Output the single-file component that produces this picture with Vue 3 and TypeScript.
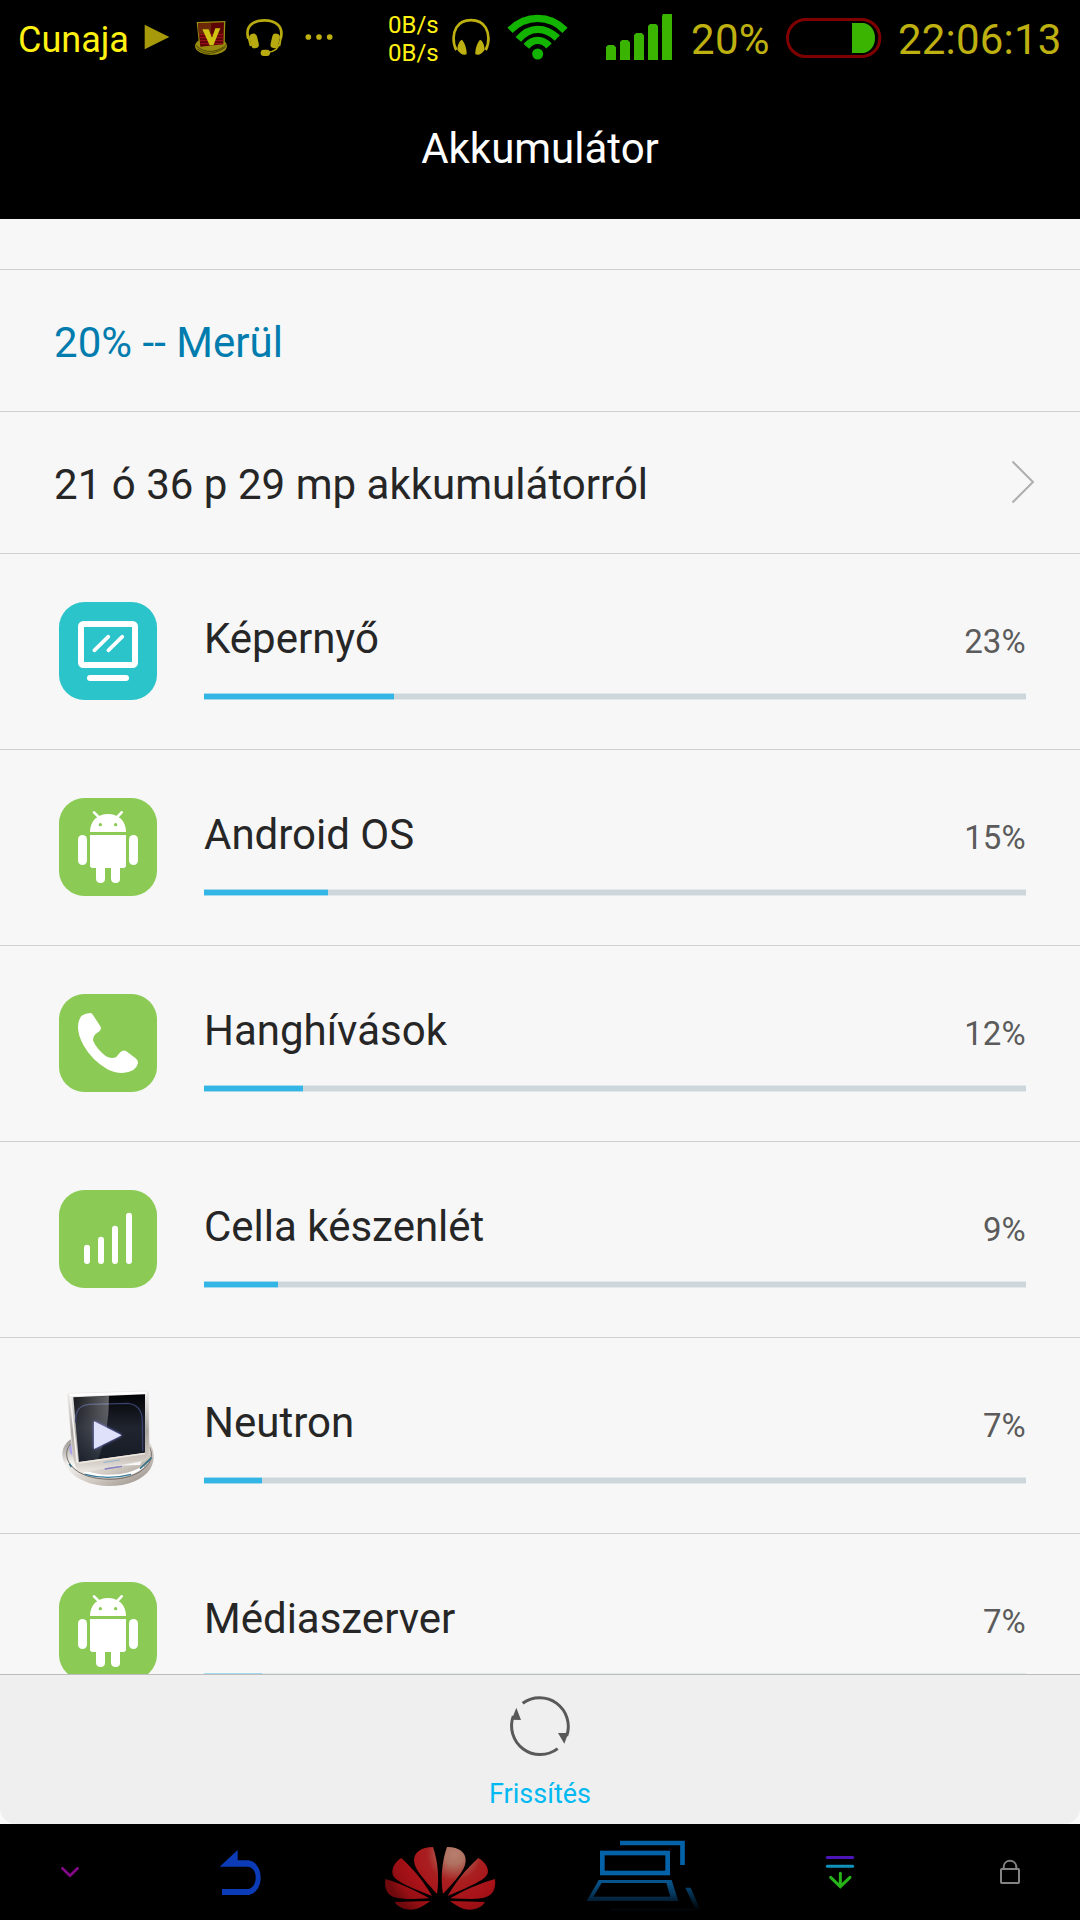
<script setup lang="ts">
type IconKind = 'screen' | 'android' | 'phone' | 'cell' | 'neutron'

interface Usage {
  name: string
  percent: number
  icon: IconKind
}

const usages: Usage[] = [
  { name: 'Képernyő', percent: 23, icon: 'screen' },
  { name: 'Android OS', percent: 15, icon: 'android' },
  { name: 'Hanghívások', percent: 12, icon: 'phone' },
  { name: 'Cella készenlét', percent: 9, icon: 'cell' },
  { name: 'Neutron', percent: 7, icon: 'neutron' },
  { name: 'Médiaszerver', percent: 7, icon: 'android' },
]

const TRACK = 822
const fillWidth = (percent: number): string => `${Math.ceil((TRACK * percent) / 100)}px`
</script>

<template>
  <div class="phone">
    <header class="status">
      <span class="carrier">Cunaja</span>
      <svg class="s-play" width="35" height="79" viewBox="420 0 105 237">
        <path d="M434 74 508 111 434 148Z" fill="#a69a0b" />
      </svg>
      <svg class="s-shield" width="42" height="79" viewBox="570 0 126 237">
        <ellipse cx="633" cy="138" rx="48" ry="27" fill="#968b0d" />
        <path d="M588 137q22 20 48 17t44-21M592 147q24 17 46 12t38-17" fill="none" stroke="#4d4600" stroke-width="3" />
        <path d="M590 66 676 63 674 134 598 142Z" fill="#9b9110" />
        <path d="M594 70 672 67 670 133 601 140Z" fill="#5c0306" />
        <path d="M594 70 634 69 632 100 596 102Z" fill="#6c2a08" />
        <path d="M598 104H671M599 113H671M600 122H670M601 131H669" stroke="#93101a" stroke-width="3.500" />
        <path d="M607 88H626L636 113 646 85H661L640 136H629Z" fill="#cfc212" />
      </svg>
      <svg class="s-headset" width="44" height="79" viewBox="729 0 132 237">
        <path d="M745 116C734 78 760 61 793 61S852 78 842 116" fill="none" stroke="#b8ab10" stroke-width="8" />
        <path d="M840 126Q836 154 800 158" fill="none" stroke="#b8ab10" stroke-width="5" />
        <rect x="751" y="101" width="23" height="44" rx="11" fill="#b8ab10" transform="rotate(-13 762 123)" />
        <rect x="814" y="101" width="23" height="44" rx="11" fill="#b8ab10" transform="rotate(13 826 123)" />
        <path d="M744 106 752 138M844 106 838 138" stroke="#b8ab10" stroke-width="6" />
        <rect x="782" y="149" width="28" height="19" rx="9" fill="#b8ab10" />
      </svg>
      <svg class="s-dots" width="40" height="79" viewBox="900 0 120 237" fill="#bdb010">
        <circle cx="925" cy="111" r="8.5" /><circle cx="957" cy="111" r="8.5" /><circle cx="989" cy="111" r="8.5" />
      </svg>
      <div class="traffic"><span>0B/s</span><span>0B/s</span></div>
      <svg width="42" height="79" viewBox="270 0 126 237">
        <path d="M289 150C276 126 280 99 289 83 307 53 359 53 377 83 386 99 390 126 377 150" fill="none" stroke="#bdb010" stroke-width="8" />
        <path d="M306 119C315 130 321 147 320 163 308 168 299 159 292 149 293 133 298 122 306 119ZM360 119C351 130 345 147 346 163 358 168 367 159 374 149 373 133 368 122 360 119Z" fill="#bdb010" />
      </svg>
      <svg class="s-wifi" width="65" height="79" viewBox="435 0 195 237">
        <g fill="none" stroke="#12b400" stroke-width="22">
          <path d="M450 91Q486 55 533 55T615 91" />
          <path d="M475 118Q501 88 533 88T592 114" />
          <path d="M499 139Q514 121 533 121T567 138" />
        </g>
        <circle cx="533" cy="162" r="16.5" fill="#12b400" />
      </svg>
      <svg class="s-signal" width="72" height="79" viewBox="729 0 216 237" fill="#3ab400">
        <path d="M738 180V141L744 135H761L768 142V180ZM780 180V126L786 120H803L810 127V180ZM822 180V105L829 99H845L852 106V180ZM864 180V78L870 72H888L894 78V180ZM906 180V48L909 42H936V180Z" />
      </svg>
      <span class="level">20%</span>
      <svg width="103" height="79" viewBox="186 0 309 237">
        <rect x="202.500" y="58.500" width="277" height="111" rx="55" fill="none" stroke="#800000" stroke-width="9" />
        <path d="M396 69H432C451 73 465 90 465 114S451 155 432 159H396Z" fill="#3ab400" />
      </svg>
      <span class="clock">22:06:13</span>
    </header>

    <div class="title">Akkumulátor</div>

    <main class="content">
      <div class="spacer"></div>
      <div class="line state">20% -- Merül</div>
      <div class="line">
        <span>21 ó 36 p 29 mp akkumulátorról</span>
        <svg class="chevron" width="24" height="44" viewBox="0 0 24 44">
          <path d="M1.500 1.500 22 22 1.500 42.500" fill="none" stroke="#afafaf" stroke-width="2" />
        </svg>
      </div>

      <section v-for="item in usages" :key="item.name" class="usage">
        <svg v-if="item.icon === 'screen'" class="icon" viewBox="57 66 294 294">
          <rect x="57" y="66" width="294" height="294" rx="76" fill="#2cc4cb" />
          <rect x="123" y="132" width="162" height="123" rx="7" fill="none" stroke="#fff" stroke-width="18" />
          <rect x="132" y="141" width="144" height="105" fill="#2cc4cb" />
          <path d="M163 211 205 170M205 211 247 170" stroke="#fff" stroke-width="11" stroke-linecap="round" />
          <rect x="141" y="285" width="126" height="18" rx="9" fill="#fff" />
        </svg>
        <svg v-else-if="item.icon === 'android'" class="icon" viewBox="57 654 294 294">
          <rect x="57" y="654" width="294" height="294" rx="76" fill="#8aca55" />
          <path d="M162 697 178 713M245 697 230 713" stroke="#fff" stroke-width="8" stroke-linecap="round" />
          <path d="M150 756C150 722 173 702 204 702S258 722 258 756Z" fill="#fff" />
          <circle cx="181" cy="734" r="5" fill="#8aca55" /><circle cx="227" cy="734" r="5" fill="#8aca55" />
          <path d="M150 765H258V856Q258 864 250 864H240V896Q240 909 227 909T213 896V864H195V896Q195 909 182 909T168 896V864H158Q150 864 150 856Z" fill="#fff" />
          <rect x="114" y="765" width="27" height="90" rx="13.500" fill="#fff" />
          <rect x="267" y="765" width="27" height="90" rx="13.500" fill="#fff" />
        </svg>
        <svg v-else-if="item.icon === 'phone'" class="icon" viewBox="57 72 294 294">
          <rect x="57" y="72" width="294" height="294" rx="76" fill="#8aca55" />
          <path d="M125 137Q136 129 151 129 156 129 159 135L181 169Q185 177 179 183L166 193Q157 203 160 214 171 238 197 258 212 268 228 262L241 247Q248 239 258 243L287 265Q295 271 294 280 291 292 280 300 264 309 247 309 222 309 202 298 155 270 130 225 114 195 114 172 114 150 125 137Z" fill="#fff" />
        </svg>
        <svg v-else-if="item.icon === 'cell'" class="icon" viewBox="57 660 294 294">
          <rect x="57" y="660" width="294" height="294" rx="76" fill="#8aca55" />
          <g fill="#fff">
            <rect x="132" y="824" width="18" height="58" rx="9" />
            <rect x="174" y="800" width="18" height="82" rx="9" />
            <rect x="216" y="767" width="18" height="115" rx="9" />
            <rect x="258" y="728" width="18" height="154" rx="9" />
          </g>
        </svg>
        <svg v-else class="icon" viewBox="57 48 294 294">
          <defs>
            <linearGradient id="chrome" x1="0" x2="1" y1="0" y2="1">
              <stop offset="0" stop-color="#8f8b88" /><stop offset=".3" stop-color="#f4f2ef" />
              <stop offset=".65" stop-color="#cbc4bc" /><stop offset="1" stop-color="#8d8580" />
            </linearGradient>
            <linearGradient id="frame" x1="0" x2="0" y1="0" y2="1">
              <stop offset="0" stop-color="#f3f2f1" /><stop offset=".5" stop-color="#aaa5a1" />
              <stop offset=".85" stop-color="#cfc8c1" /><stop offset="1" stop-color="#eee9e4" />
            </linearGradient>
            <linearGradient id="glass" x1="0" x2="0" y1="0" y2="1">
              <stop offset="0" stop-color="#030407" /><stop offset=".5" stop-color="#20242f" /><stop offset="1" stop-color="#151b25" />
            </linearGradient>
            <linearGradient id="shine" x1="0" x2="1" y1="0" y2="0">
              <stop offset="0" stop-color="#fff" stop-opacity=".08" /><stop offset="1" stop-color="#fff" stop-opacity=".42" />
            </linearGradient>
            <linearGradient id="sheen" x1="0" x2="0" y1="0" y2="1">
              <stop offset="0" stop-color="#fff" /><stop offset="1" stop-color="#333" />
            </linearGradient>
            <mask id="fade"><path d="M80 60H330V290H80Z" fill="url(#sheen)" /></mask>
            <filter id="glow" x="-50%" y="-50%" width="200%" height="200%"><feGaussianBlur stdDeviation="5" /></filter>
          </defs>
          <path d="M92 208C62 228 60 264 82 294 105 329 157 348 206 348 264 348 310 329 331 296 348 267 342 239 328 217L300 285 122 290Z" fill="url(#chrome)" />
          <path d="M91 222C76 240 75 267 96 290 119 315 160 327 207 328 256 328 298 314 321 287 336 270 338 249 328 231" fill="none" stroke="#77706b" stroke-width="3" />
          <path d="M101 279Q134 313 204 314 275 314 311 284L312 292Q275 325 204 324 139 323 99 289Z" fill="#fff" />
          <path d="M135 313Q205 331 273 313" fill="none" stroke="#377d9c" stroke-width="4" />
          <path d="M94 227Q88 240 99 254" fill="none" stroke="#a89cf0" stroke-width="7" />
          <path d="M88 281 94 291M300 296 335 263" stroke="#347187" stroke-width="5" />
          <path d="M83 77Q83 70 90 70L317 63Q326 62 326 71L328 246Q328 267 306 274L132 306Q112 307 106 288L98 260Z" fill="url(#frame)" stroke="#e4e2e0" stroke-width="1.500" />
          <path d="M88 75 320 68" stroke="#fff" stroke-width="7" />
          <path d="M91 80 112 279" stroke="#f5f3f1" stroke-width="5" />
          <path d="M100 82 315 73 315 248 117 276Z" fill="url(#glass)" />
          <path d="M107 157Q103 106 149 103L264 100Q305 105 307 150L308 244" fill="none" stroke="#39406a" stroke-width="4" />
          <path d="M100 82 207 78Q208 185 174 268L117 276Z" fill="url(#shine)" mask="url(#fade)" />
          <path d="M117 276 315 248V253L118 281Z" fill="#eee8e1" />
          <path d="M190 278 240 270M195 297 245 289" stroke="#8fb7cc" stroke-width="3" />
          <path d="M194 297 246 289" stroke="#8980c0" stroke-width="4" />
          <path d="M162 154 245 196 162 237Z" fill="#8b91ff" filter="url(#glow)" />
          <path d="M162 154 245 196 162 237Z" fill="#dfe1fb" />
        </svg>

        <div class="detail">
          <div class="labels">
            <span class="name">{{ item.name }}</span>
            <span class="percent">{{ item.percent }}%</span>
          </div>
          <div class="track"><div class="fill" :style="{ width: fillWidth(item.percent) }"></div></div>
        </div>
      </section>
    </main>

    <div class="footer-wrap">
      <footer class="footer">
        <svg width="66" height="66" viewBox="201 99 198 198">
          <g fill="none" stroke="#595959" stroke-width="9">
            <path d="M248 130A86 86 0 0 1 380 228" />
            <path d="M353 266A86 86 0 0 1 220 168" />
          </g>
          <path d="M229 143 243 180 215 179ZM354 219H385L373 251Z" fill="#595959" />
        </svg>
        <span>Frissítés</span>
      </footer>
    </div>

    <nav class="nav">
      <svg width="140" height="96" viewBox="0 12 420 288">
        <path d="M187 145 210 167 233 145" fill="none" stroke="#87078a" stroke-width="8" stroke-linecap="round" />
      </svg>
      <svg width="200" height="96" viewBox="420 12 600 288">
        <path d="M659 140 713 90V121H745C769 124 782 149 782 173S769 220 747 225H666V207H743C758 205 767 191 767 173S759 142 745 140Z" fill="#0b3bb7" />
      </svg>
      <svg width="200" height="96" viewBox="-60 12 600 288">
        <defs>
          <radialGradient id="petal" gradientUnits="userSpaceOnUse" cx="283" cy="102" r="215">
            <stop offset="0" stop-color="#b77f70" /><stop offset=".14" stop-color="#b07261" />
            <stop offset=".38" stop-color="#a91f20" /><stop offset=".65" stop-color="#a81218" />
            <stop offset=".85" stop-color="#960f14" /><stop offset="1" stop-color="#6f090d" />
          </radialGradient>
        </defs>
        <g fill="url(#petal)">
          <path d="M219 81C184 81 162 97 162 121 163 143 177 163 231 222 238 178 234 123 219 81Z" />
          <path d="M261 81C296 80 318 98 317 120 317 146 299 168 249 222 241 177 246 122 261 81Z" />
          <path d="M124 114C101 128 94 148 98 164 105 181 133 195 216 228 194 188 158 145 124 114Z" />
          <path d="M355 114C379 128 386 146 383 160 377 178 348 192 263 228 284 190 319 146 355 114Z" />
          <path d="M76 177C73 201 79 220 96 229 118 239 150 238 208 235 168 212 121 190 76 177Z" />
          <path d="M405 177C408 201 401 219 385 228 363 239 330 238 270 235 312 211 358 190 405 177Z" />
          <path d="M104 246C113 260 131 269 151 269 174 269 192 257 211 243Z" />
          <path d="M375 246C367 260 350 269 329 269 306 269 289 257 270 243Z" />
        </g>
      </svg>
      <svg width="200" height="96" viewBox="540 12 600 288">
        <defs>
          <linearGradient id="deck" gradientUnits="userSpaceOnUse" x1="0" x2="0" y1="176" y2="250">
            <stop offset="0" stop-color="#075a96" /><stop offset=".6" stop-color="#06395f" /><stop offset="1" stop-color="#021524" />
          </linearGradient>
          <linearGradient id="edge" gradientUnits="userSpaceOnUse" x1="0" x2="0" y1="200" y2="272">
            <stop offset="0" stop-color="#06446f" /><stop offset="1" stop-color="#000" />
          </linearGradient>
        </defs>
        <g fill="none">
          <path d="M780 69H967.500V135" stroke="#0462a8" stroke-width="14" />
          <rect x="727" y="99" width="196" height="60" stroke="#0462a8" stroke-width="14" />
          <path d="M976 203H992L1021 269H1007Z" fill="url(#edge)" />
          <path d="M750 268H1005" stroke="#010810" stroke-width="4" />
        </g>
        <path d="M716 180H935L955 243H680ZM725 189 700 230H931L919 189Z" fill="url(#deck)" fill-rule="evenodd" />
      </svg>
      <svg width="200" height="96" viewBox="60 12 600 288">
        <g fill="none" stroke-width="9" stroke-linecap="round">
          <path d="M322 112.500H398" stroke="#4b16b5" />
          <path d="M322 139H398" stroke="#1192bc" />
          <path d="M361 160V198M332 172 361 200 390 172" stroke="#26b419" />
        </g>
      </svg>
      <svg width="140" height="96" viewBox="660 12 420 288">
        <rect x="843" y="147" width="54" height="42" rx="2" fill="none" stroke="#838383" stroke-width="6" />
        <path d="M851 146V142C851 116 889 116 889 142V146" fill="none" stroke="#838383" stroke-width="6" />
      </svg>
    </nav>
  </div>
</template>

<style>
body {
  margin: 0;
  background: #000;
}
</style>

<style scoped>
.phone {
  display: flex;
  flex-direction: column;
  width: 1080px;
  height: 1920px;
  overflow: hidden;
  background: #000;
  color: #262626;
  font-family: Roboto, sans-serif;
}
svg {
  display: block;
  flex: none;
}
.status {
  display: flex;
  flex: none;
  align-items: center;
  height: 79px;
  color: #bdb010;
  font-size: 42px;
  white-space: nowrap;
}
.carrier {
  width: 122px;
  margin-left: 18px;
  color: #fff112;
  font-size: 36px;
}
.s-shield {
  margin-left: 15px;
}
.s-headset {
  margin-left: 11px;
}
.s-dots {
  margin-left: 13px;
}
.traffic {
  display: flex;
  flex-direction: column;
  width: 62px;
  margin-left: 48px;
  padding-bottom: 2px;
  color: #fff112;
  font-size: 24px;
  line-height: 28px;
}
.s-wifi {
  margin-left: 13px;
}
.s-signal {
  margin-left: 33px;
}
.level {
  width: 91px;
  margin-left: 16px;
  letter-spacing: 0.3px;
}
.clock {
  margin-left: 13px;
  letter-spacing: 0.2px;
}
.title {
  display: flex;
  flex: none;
  align-items: center;
  justify-content: center;
  box-sizing: border-box;
  height: 140px;
  padding-bottom: 2px;
  color: #fff;
  font-size: 42px;
}
.content {
  flex: 1;
  min-height: 0;
  overflow: hidden;
  background: #f7f7f7;
}
.spacer {
  height: 50px;
  border-bottom: 1px solid #d0d0d0;
}
.line {
  display: flex;
  align-items: center;
  justify-content: space-between;
  box-sizing: border-box;
  height: 142px;
  padding: 3px 45px 0 54px;
  border-bottom: 1px solid #d0d0d0;
  font-size: 42px;
  letter-spacing: 0.03px;
}
.state {
  color: #007dae;
}
.chevron {
  margin-bottom: 5px;
}
.usage {
  display: flex;
  box-sizing: border-box;
  height: 196px;
  border-bottom: 1px solid #d0d0d0;
}
.icon {
  width: 98px;
  height: 98px;
  margin: 48px 47px 0 59px;
  overflow: visible;
}
.detail {
  width: 822px;
  padding-top: 60px;
}
.labels {
  display: flex;
  align-items: baseline;
  justify-content: space-between;
  height: 50px;
  line-height: 50px;
}
.name {
  font-size: 42px;
}
.percent {
  color: #5b5b5b;
  font-size: 33px;
  letter-spacing: 0.2px;
}
.track {
  height: 7px;
  margin-top: 29px;
  background: linear-gradient(#e3e8ea 1px, #cdd6da 1px, #cdd6da 6px, #e3e8ea 6px);
}
.fill {
  height: 7px;
  background: linear-gradient(#a3d9ee 1px, #33b5e5 1px, #33b5e5 6px, #a3d9ee 6px);
}
.footer-wrap {
  flex: none;
  background: #fafafa;
}
.footer {
  display: flex;
  flex-direction: column;
  align-items: center;
  box-sizing: border-box;
  height: 150px;
  padding-top: 18px;
  border-top: 1px solid #bcbcbc;
  border-radius: 0 0 16px 16px;
  background: #efefef;
  color: #00b9f2;
  font-size: 27px;
}
.footer span {
  margin-top: 18px;
  line-height: 34px;
}
.nav {
  display: flex;
  flex: none;
  height: 96px;
}
</style>
